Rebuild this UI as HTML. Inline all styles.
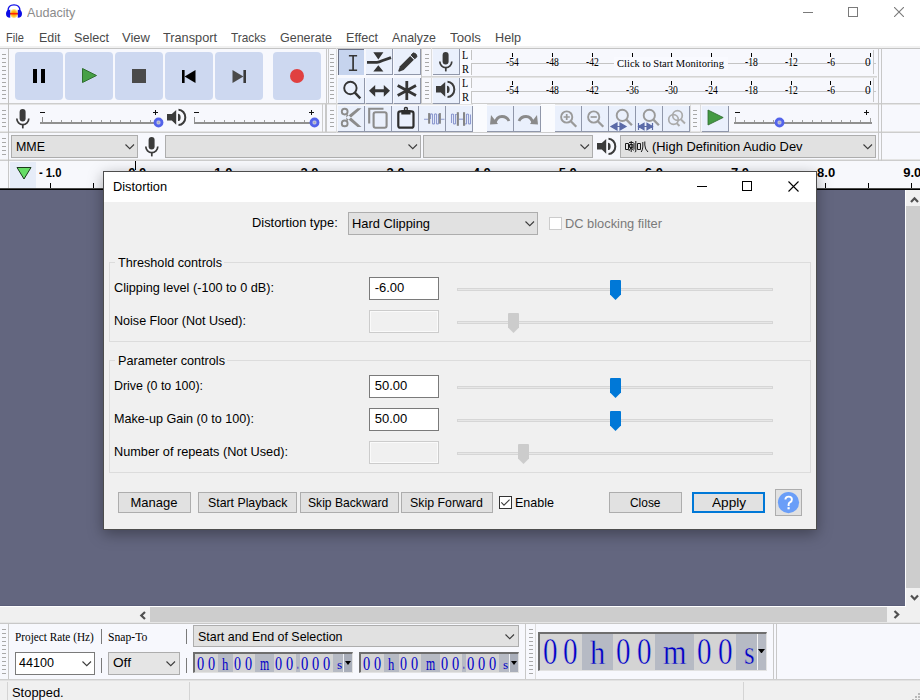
<!DOCTYPE html><html><head><meta charset="utf-8"><style>
html,body{margin:0;padding:0;width:920px;height:700px;overflow:hidden;background:#fff;position:relative}
.t{position:absolute;white-space:nowrap;transform-origin:0 0}
</style></head><body>
<div style="position:absolute;left:0px;top:0px;width:920px;height:47px;background:#fff"></div>
<div style="position:absolute;left:0px;top:46px;width:920px;height:2px;background:#f1f1f1"></div>
<div style="position:absolute;left:0px;top:48px;width:920px;height:1px;background:#c4c4c4"></div>
<div style="position:absolute;left:0px;top:49px;width:920px;height:112px;background:#f7f8fd"></div>
<svg style="position:absolute;left:0px;top:0px;" width="26" height="22" viewBox="0 0 26 22"><defs><radialGradient id="wg" cx="0.5" cy="0.5" r="0.5"><stop offset="0" stop-color="#ff8c00"/><stop offset="0.6" stop-color="#ffc020"/><stop offset="1" stop-color="#fff0b0"/></radialGradient></defs>
<path d="M8 11 C8 6.3 10.5 4.9 14 4.9 C17.5 4.9 20 6.3 20 11" fill="none" stroke="#1010e8" stroke-width="1.4"/>
<ellipse cx="14" cy="13.6" rx="4.2" ry="4.6" fill="url(#wg)"/>
<rect x="10" y="12.9" width="8" height="1.6" fill="#ff2400"/>
<path d="M10.2 9.8 V17.8 Q6 17.6 6 13.8 Q6 10 10.2 9.8 Z M17.8 9.8 V17.8 Q22 17.6 22 13.8 Q22 10 17.8 9.8 Z" fill="#0c0ce6"/></svg>
<div class="t" style="left:27.40px;top:6.00px;font-size:13px;line-height:13px;font-family:'Liberation Sans',sans-serif;color:#8b8b8b;transform:scaleX(0.9708);">Audacity</div>
<div style="position:absolute;left:803px;top:12px;width:10px;height:1px;background:#7a7a7a"></div>
<div style="position:absolute;left:848px;top:7px;width:10px;height:10px;border:1px solid #7a7a7a;box-sizing:border-box"></div>
<svg style="position:absolute;left:894px;top:7px;" width="10" height="10" viewBox="0 0 10 10"><path d="M0 0 L10 10 M10 0 L0 10" stroke="#7a7a7a" stroke-width="1.1"/></svg>
<div class="t" style="left:5.80px;top:31.30px;font-size:13px;line-height:13px;font-family:'Liberation Sans',sans-serif;color:#4a4a4a;transform:scaleX(0.8499);">File</div>
<div class="t" style="left:38.60px;top:31.30px;font-size:13px;line-height:13px;font-family:'Liberation Sans',sans-serif;color:#4a4a4a;transform:scaleX(0.9554);">Edit</div>
<div class="t" style="left:74.00px;top:31.30px;font-size:13px;line-height:13px;font-family:'Liberation Sans',sans-serif;color:#4a4a4a;transform:scaleX(0.9688);">Select</div>
<div class="t" style="left:122.00px;top:31.30px;font-size:13px;line-height:13px;font-family:'Liberation Sans',sans-serif;color:#4a4a4a;">View</div>
<div class="t" style="left:163.00px;top:31.30px;font-size:13px;line-height:13px;font-family:'Liberation Sans',sans-serif;color:#4a4a4a;transform:scaleX(0.9792);">Transport</div>
<div class="t" style="left:231.00px;top:31.30px;font-size:13px;line-height:13px;font-family:'Liberation Sans',sans-serif;color:#4a4a4a;transform:scaleX(0.9086);">Tracks</div>
<div class="t" style="left:280.00px;top:31.30px;font-size:13px;line-height:13px;font-family:'Liberation Sans',sans-serif;color:#4a4a4a;transform:scaleX(0.9595);">Generate</div>
<div class="t" style="left:346.00px;top:31.30px;font-size:13px;line-height:13px;font-family:'Liberation Sans',sans-serif;color:#4a4a4a;transform:scaleX(0.9695);">Effect</div>
<div class="t" style="left:392.00px;top:31.30px;font-size:13px;line-height:13px;font-family:'Liberation Sans',sans-serif;color:#4a4a4a;transform:scaleX(0.9513);">Analyze</div>
<div class="t" style="left:450.00px;top:31.30px;font-size:13px;line-height:13px;font-family:'Liberation Sans',sans-serif;color:#4a4a4a;transform:scaleX(1.0217);">Tools</div>
<div class="t" style="left:495.00px;top:31.30px;font-size:13px;line-height:13px;font-family:'Liberation Sans',sans-serif;color:#4a4a4a;transform:scaleX(0.9723);">Help</div>
<div style="position:absolute;left:0px;top:103px;width:920px;height:1px;background:#cdcdcd"></div>
<div style="position:absolute;left:0px;top:104px;width:920px;height:1px;background:#e4e4e4"></div>
<div style="position:absolute;left:0px;top:131px;width:920px;height:1px;background:#e4e4e4"></div>
<div style="position:absolute;left:0px;top:132px;width:920px;height:1px;background:#cdcdcd"></div>
<div style="position:absolute;left:0px;top:159px;width:920px;height:1px;background:#e4e4e4"></div>
<div style="position:absolute;left:0px;top:160px;width:920px;height:1px;background:#cdcdcd"></div>
<div style="position:absolute;left:2px;top:54px;width:4px;height:1px;background:#a8a8a8"></div>
<div style="position:absolute;left:2px;top:58px;width:4px;height:1px;background:#a8a8a8"></div>
<div style="position:absolute;left:2px;top:62px;width:4px;height:1px;background:#a8a8a8"></div>
<div style="position:absolute;left:2px;top:66px;width:4px;height:1px;background:#a8a8a8"></div>
<div style="position:absolute;left:2px;top:70px;width:4px;height:1px;background:#a8a8a8"></div>
<div style="position:absolute;left:2px;top:74px;width:4px;height:1px;background:#a8a8a8"></div>
<div style="position:absolute;left:2px;top:78px;width:4px;height:1px;background:#a8a8a8"></div>
<div style="position:absolute;left:2px;top:82px;width:4px;height:1px;background:#a8a8a8"></div>
<div style="position:absolute;left:2px;top:86px;width:4px;height:1px;background:#a8a8a8"></div>
<div style="position:absolute;left:2px;top:90px;width:4px;height:1px;background:#a8a8a8"></div>
<div style="position:absolute;left:2px;top:94px;width:4px;height:1px;background:#a8a8a8"></div>
<div style="position:absolute;left:2px;top:98px;width:4px;height:1px;background:#a8a8a8"></div>
<div style="position:absolute;left:8px;top:48px;width:1px;height:56px;background:#c0c0c0"></div>
<div style="position:absolute;left:15px;top:52px;width:48px;height:48px;background:#cdd8f0;border-radius:4px"></div>
<div style="position:absolute;left:65px;top:52px;width:48px;height:48px;background:#cdd8f0;border-radius:4px"></div>
<div style="position:absolute;left:115px;top:52px;width:48px;height:48px;background:#cdd8f0;border-radius:4px"></div>
<div style="position:absolute;left:165px;top:52px;width:48px;height:48px;background:#cdd8f0;border-radius:4px"></div>
<div style="position:absolute;left:215px;top:52px;width:48px;height:48px;background:#cdd8f0;border-radius:4px"></div>
<div style="position:absolute;left:273px;top:52px;width:48px;height:48px;background:#cdd8f0;border-radius:4px"></div>
<div style="position:absolute;left:32.5px;top:69px;width:4.5px;height:14px;background:#000"></div>
<div style="position:absolute;left:40.5px;top:69px;width:4.5px;height:14px;background:#000"></div>
<svg style="position:absolute;left:81px;top:67px;" width="17" height="17" viewBox="0 0 17 17"><path d="M1.5 1.5 L15.5 8.5 L1.5 15.5 Z" fill="#46a046" stroke="#2f6f2f" stroke-width="1"/></svg>
<div style="position:absolute;left:132px;top:69px;width:14px;height:14px;background:#4a4a4a"></div>
<svg style="position:absolute;left:181px;top:69px;" width="16" height="15" viewBox="0 0 16 15"><rect x="1" y="1" width="2.6" height="13" fill="#000"/><path d="M3.6 7.5 L14.5 1 L14.5 14 Z" fill="#000"/></svg>
<svg style="position:absolute;left:231px;top:69px;" width="16" height="15" viewBox="0 0 16 15"><rect x="12.4" y="1" width="2.6" height="13" fill="#3a3a3a"/><path d="M12.4 7.5 L1.5 1 L1.5 14 Z" fill="#4a4a4a"/></svg>
<svg style="position:absolute;left:289px;top:68px;" width="16" height="16" viewBox="0 0 16 16"><circle cx="8" cy="8" r="7" fill="#e04040"/></svg>
<div style="position:absolute;left:326px;top:48px;width:1px;height:56px;background:#c8c8c8"></div>
<div style="position:absolute;left:328px;top:48px;width:1px;height:56px;background:#c8c8c8"></div>
<div style="position:absolute;left:330px;top:54px;width:4px;height:1px;background:#a8a8a8"></div>
<div style="position:absolute;left:330px;top:58px;width:4px;height:1px;background:#a8a8a8"></div>
<div style="position:absolute;left:330px;top:62px;width:4px;height:1px;background:#a8a8a8"></div>
<div style="position:absolute;left:330px;top:66px;width:4px;height:1px;background:#a8a8a8"></div>
<div style="position:absolute;left:330px;top:70px;width:4px;height:1px;background:#a8a8a8"></div>
<div style="position:absolute;left:330px;top:74px;width:4px;height:1px;background:#a8a8a8"></div>
<div style="position:absolute;left:330px;top:78px;width:4px;height:1px;background:#a8a8a8"></div>
<div style="position:absolute;left:330px;top:82px;width:4px;height:1px;background:#a8a8a8"></div>
<div style="position:absolute;left:330px;top:86px;width:4px;height:1px;background:#a8a8a8"></div>
<div style="position:absolute;left:330px;top:90px;width:4px;height:1px;background:#a8a8a8"></div>
<div style="position:absolute;left:330px;top:94px;width:4px;height:1px;background:#a8a8a8"></div>
<div style="position:absolute;left:330px;top:98px;width:4px;height:1px;background:#a8a8a8"></div>
<div style="position:absolute;left:336px;top:48px;width:1px;height:56px;background:#dcdcdc"></div>
<div style="position:absolute;left:338px;top:49px;width:26px;height:26px;background:#c6d4ee;border-top:1px solid #6b7186;border-left:1px solid #6b7186;box-sizing:border-box"></div>
<div style="position:absolute;left:366px;top:49px;width:27px;height:26px;background:#eaf0fc;border-right:1px solid #9097aa;border-bottom:1px solid #9097aa;box-sizing:border-box"></div>
<div style="position:absolute;left:394px;top:49px;width:27px;height:26px;background:#eaf0fc;border-right:1px solid #9097aa;border-bottom:1px solid #9097aa;box-sizing:border-box"></div>
<div style="position:absolute;left:338px;top:78px;width:27px;height:26px;background:#eaf0fc;border-right:1px solid #9097aa;border-bottom:1px solid #9097aa;box-sizing:border-box"></div>
<div style="position:absolute;left:366px;top:78px;width:27px;height:26px;background:#eaf0fc;border-right:1px solid #9097aa;border-bottom:1px solid #9097aa;box-sizing:border-box"></div>
<div style="position:absolute;left:394px;top:78px;width:27px;height:26px;background:#eaf0fc;border-right:1px solid #9097aa;border-bottom:1px solid #9097aa;box-sizing:border-box"></div>
<svg style="position:absolute;left:0px;top:0px;" width="920" height="110" viewBox="0 0 920 110"><path d="M348.9 55.8 H357.1 M348.9 70.2 H357.1" stroke="#353535" stroke-width="1.5"/><path d="M353.1 56 V70" stroke="#353535" stroke-width="1.7"/>
<path d="M373.3 52.3 H383.4 L378.35 59.5 Z M373.3 71.4 H383.4 L378.35 65.2 Z" fill="#353535"/>
<path d="M367 62.3 H377 Q379 62.3 382 60.8 L391 57.6" stroke="#353535" stroke-width="2.8" fill="none"/>
<path d="M398.18 70.88 L399.02 71.72 L403.62 69.96 L413.87 59.70 L410.20 56.03 L399.94 66.28 Z" fill="#383838"/><path d="M414.79 58.78 L417.06 56.52 L415.92 53.98 L413.38 52.84 L411.12 55.11 Z" fill="#383838" stroke="#383838" stroke-width="1" stroke-linejoin="round"/>
<circle cx="350.4" cy="88" r="6.2" fill="none" stroke="#353535" stroke-width="1.9"/><path d="M354.6 92.3 L360.3 98.3" stroke="#353535" stroke-width="2.5"/>
<path d="M369 90.8 L375.2 84.9 V89.3 H383.8 V84.9 L390 90.8 L383.8 96.7 V92.3 H375.2 V96.7 Z" fill="#353535"/>
<path d="M406.8 80.9 V99.9 M397.7 85.5 L416 95.6 M416 85.5 L397.7 95.6" stroke="#353535" stroke-width="2.8"/>
</svg>
<div style="position:absolute;left:421px;top:48px;width:1px;height:56px;background:#c8c8c8"></div>
<div style="position:absolute;left:425px;top:54px;width:4px;height:1px;background:#a8a8a8"></div>
<div style="position:absolute;left:425px;top:58px;width:4px;height:1px;background:#a8a8a8"></div>
<div style="position:absolute;left:425px;top:62px;width:4px;height:1px;background:#a8a8a8"></div>
<div style="position:absolute;left:425px;top:66px;width:4px;height:1px;background:#a8a8a8"></div>
<div style="position:absolute;left:425px;top:70px;width:4px;height:1px;background:#a8a8a8"></div>
<div style="position:absolute;left:425px;top:82px;width:4px;height:1px;background:#a8a8a8"></div>
<div style="position:absolute;left:425px;top:86px;width:4px;height:1px;background:#a8a8a8"></div>
<div style="position:absolute;left:425px;top:90px;width:4px;height:1px;background:#a8a8a8"></div>
<div style="position:absolute;left:425px;top:94px;width:4px;height:1px;background:#a8a8a8"></div>
<div style="position:absolute;left:425px;top:98px;width:4px;height:1px;background:#a8a8a8"></div>
<div style="position:absolute;left:431px;top:48px;width:1px;height:56px;background:#dcdcdc"></div>
<div style="position:absolute;left:433px;top:49px;width:27px;height:26px;background:#eaf0fc;border-right:1px solid #9097aa;border-bottom:1px solid #9097aa;box-sizing:border-box"></div>
<div style="position:absolute;left:433px;top:78px;width:27px;height:26px;background:#eaf0fc;border-right:1px solid #9097aa;border-bottom:1px solid #9097aa;box-sizing:border-box"></div>
<svg style="position:absolute;left:438px;top:51.2px;" width="16" height="22" viewBox="0 0 16 22"><g transform="translate(1 1)"><rect x="3.6" y="0" width="6" height="12.6" rx="3" fill="#3b3b3b"/><path d="M0.8 9.6 A6 6 0 0 0 12.8 9.6" fill="none" stroke="#3b3b3b" stroke-width="1.7"/><path d="M6.8 15.4 V19.4" stroke="#3b3b3b" stroke-width="1.7"/></g></svg>
<svg style="position:absolute;left:435px;top:80.3px;" width="21" height="19" viewBox="0 0 21 19"><g transform="translate(1 1)"><path d="M0 5 H4.8 L9.2 1 V15.8 L4.8 11.6 H0 Z" fill="#3b3b3b"/><path d="M11 4.8 A2.6 3.6 0 0 1 11 12 Z" fill="#3b3b3b"/><path d="M11.5 0.8 A6.8 7.6 0 0 1 11.5 16" fill="none" stroke="#3b3b3b" stroke-width="2"/></g></svg>
<div style="position:absolute;left:878px;top:48px;width:1px;height:113px;background:#c8c8c8"></div>
<div style="position:absolute;left:881px;top:48px;width:1px;height:113px;background:#c8c8c8"></div>
<div style="position:absolute;left:460px;top:49px;width:11px;height:27px;background:#fafbff"></div>
<div style="position:absolute;left:471px;top:50px;width:1px;height:10px;background:#c4c4c4"></div>
<div style="position:absolute;left:471px;top:63px;width:1px;height:12px;background:#c4c4c4"></div>
<div style="position:absolute;left:471px;top:63px;width:400px;height:1px;background:#c4c4c4"></div>
<div style="position:absolute;left:873px;top:50px;width:1px;height:24px;background:#c8c8c8"></div>
<div style="position:absolute;left:873px;top:63px;width:3px;height:1px;background:#c8c8c8"></div>
<div class="t" style="left:461.80px;top:49.00px;font-size:12px;line-height:12px;font-family:'Liberation Serif',serif;color:#000;transform:scaleX(0.8456);">L</div>
<div class="t" style="left:462.00px;top:62.80px;font-size:12px;line-height:12px;font-family:'Liberation Serif',serif;color:#000;transform:scaleX(0.8746);">R</div>
<div style="position:absolute;left:460px;top:77px;width:11px;height:27px;background:#fafbff"></div>
<div style="position:absolute;left:471px;top:78px;width:1px;height:10px;background:#c4c4c4"></div>
<div style="position:absolute;left:471px;top:91px;width:1px;height:12px;background:#c4c4c4"></div>
<div style="position:absolute;left:471px;top:91px;width:400px;height:1px;background:#c4c4c4"></div>
<div style="position:absolute;left:873px;top:78px;width:1px;height:24px;background:#c8c8c8"></div>
<div style="position:absolute;left:873px;top:91px;width:3px;height:1px;background:#c8c8c8"></div>
<div class="t" style="left:461.80px;top:77.00px;font-size:12px;line-height:12px;font-family:'Liberation Serif',serif;color:#000;transform:scaleX(0.8456);">L</div>
<div class="t" style="left:462.00px;top:90.80px;font-size:12px;line-height:12px;font-family:'Liberation Serif',serif;color:#000;transform:scaleX(0.8746);">R</div>
<div style="position:absolute;left:422px;top:76px;width:455px;height:1px;background:#d4d4d4"></div>
<div style="position:absolute;left:422px;top:77px;width:455px;height:1px;background:#e4e4e4"></div>
<div style="position:absolute;left:2px;top:110px;width:4px;height:1px;background:#a8a8a8"></div>
<div style="position:absolute;left:2px;top:114px;width:4px;height:1px;background:#a8a8a8"></div>
<div style="position:absolute;left:2px;top:118px;width:4px;height:1px;background:#a8a8a8"></div>
<div style="position:absolute;left:2px;top:122px;width:4px;height:1px;background:#a8a8a8"></div>
<div style="position:absolute;left:2px;top:126px;width:4px;height:1px;background:#a8a8a8"></div>
<div style="position:absolute;left:8px;top:104px;width:1px;height:29px;background:#c0c0c0"></div>
<svg style="position:absolute;left:15px;top:108px;" width="16" height="22" viewBox="0 0 16 22"><g transform="translate(1 1)"><rect x="3.6" y="0" width="6" height="12.6" rx="3" fill="#3b3b3b"/><path d="M0.8 9.6 A6 6 0 0 0 12.8 9.6" fill="none" stroke="#3b3b3b" stroke-width="1.7"/><path d="M6.8 15.4 V19.4" stroke="#3b3b3b" stroke-width="1.7"/></g></svg>
<div style="position:absolute;left:40px;top:122px;width:118.5px;height:2px;background:#909090"></div>
<div style="position:absolute;left:41.5px;top:117px;width:1px;height:5px;background:#909090"></div>
<div style="position:absolute;left:51.35px;top:120px;width:1px;height:2px;background:#a0a0a0"></div>
<div style="position:absolute;left:61.2px;top:120px;width:1px;height:2px;background:#a0a0a0"></div>
<div style="position:absolute;left:71.05px;top:120px;width:1px;height:2px;background:#a0a0a0"></div>
<div style="position:absolute;left:80.9px;top:120px;width:1px;height:2px;background:#a0a0a0"></div>
<div style="position:absolute;left:90.75px;top:120px;width:1px;height:2px;background:#a0a0a0"></div>
<div style="position:absolute;left:100.6px;top:120px;width:1px;height:2px;background:#a0a0a0"></div>
<div style="position:absolute;left:110.45px;top:120px;width:1px;height:2px;background:#a0a0a0"></div>
<div style="position:absolute;left:120.3px;top:120px;width:1px;height:2px;background:#a0a0a0"></div>
<div style="position:absolute;left:130.14999999999998px;top:120px;width:1px;height:2px;background:#a0a0a0"></div>
<div style="position:absolute;left:140.0px;top:120px;width:1px;height:2px;background:#a0a0a0"></div>
<div style="position:absolute;left:149.85px;top:120px;width:1px;height:2px;background:#a0a0a0"></div>
<div style="position:absolute;left:40px;top:112px;width:5px;height:1.2px;background:#111"></div>
<div style="position:absolute;left:152.7px;top:112px;width:5px;height:1.2px;background:#111"></div>
<div style="position:absolute;left:154.6px;top:110px;width:1.2px;height:5px;background:#111"></div>
<svg style="position:absolute;left:153.0px;top:117px;" width="11" height="11" viewBox="0 0 11 11"><circle cx="5.5" cy="5.5" r="4.9" fill="#5363ea"/><rect x="4" y="4" width="3" height="3" rx="0.8" fill="#a8aab8" stroke="#dfe2f2" stroke-width="0.7"/></svg>
<svg style="position:absolute;left:165.5px;top:108.3px;" width="21" height="19" viewBox="0 0 21 19"><g transform="translate(1 1)"><path d="M0 5 H4.8 L9.2 1 V15.8 L4.8 11.6 H0 Z" fill="#3b3b3b"/><path d="M11 4.8 A2.6 3.6 0 0 1 11 12 Z" fill="#3b3b3b"/><path d="M11.5 0.8 A6.8 7.6 0 0 1 11.5 16" fill="none" stroke="#3b3b3b" stroke-width="2"/></g></svg>
<div style="position:absolute;left:194px;top:122px;width:120.5px;height:2px;background:#909090"></div>
<div style="position:absolute;left:194.4px;top:117px;width:1px;height:5px;background:#909090"></div>
<div style="position:absolute;left:204.4px;top:120px;width:1px;height:2px;background:#a0a0a0"></div>
<div style="position:absolute;left:214.4px;top:120px;width:1px;height:2px;background:#a0a0a0"></div>
<div style="position:absolute;left:224.4px;top:120px;width:1px;height:2px;background:#a0a0a0"></div>
<div style="position:absolute;left:234.4px;top:120px;width:1px;height:2px;background:#a0a0a0"></div>
<div style="position:absolute;left:244.4px;top:120px;width:1px;height:2px;background:#a0a0a0"></div>
<div style="position:absolute;left:254.4px;top:120px;width:1px;height:2px;background:#a0a0a0"></div>
<div style="position:absolute;left:264.4px;top:120px;width:1px;height:2px;background:#a0a0a0"></div>
<div style="position:absolute;left:274.4px;top:120px;width:1px;height:2px;background:#a0a0a0"></div>
<div style="position:absolute;left:284.4px;top:120px;width:1px;height:2px;background:#a0a0a0"></div>
<div style="position:absolute;left:294.4px;top:120px;width:1px;height:2px;background:#a0a0a0"></div>
<div style="position:absolute;left:304.4px;top:120px;width:1px;height:2px;background:#a0a0a0"></div>
<div style="position:absolute;left:194px;top:112px;width:5px;height:1.2px;background:#111"></div>
<div style="position:absolute;left:308.7px;top:112px;width:5px;height:1.2px;background:#111"></div>
<div style="position:absolute;left:310.6px;top:110px;width:1.2px;height:5px;background:#111"></div>
<svg style="position:absolute;left:308.5px;top:117px;" width="11" height="11" viewBox="0 0 11 11"><circle cx="5.5" cy="5.5" r="4.9" fill="#5363ea"/><rect x="4" y="4" width="3" height="3" rx="0.8" fill="#a8aab8" stroke="#dfe2f2" stroke-width="0.7"/></svg>
<div style="position:absolute;left:322px;top:104px;width:1px;height:28px;background:#cccccc"></div>
<div style="position:absolute;left:325px;top:104px;width:2px;height:28px;background:#c8c8c8"></div>
<div style="position:absolute;left:330px;top:110px;width:4px;height:1px;background:#a8a8a8"></div>
<div style="position:absolute;left:330px;top:114px;width:4px;height:1px;background:#a8a8a8"></div>
<div style="position:absolute;left:330px;top:118px;width:4px;height:1px;background:#a8a8a8"></div>
<div style="position:absolute;left:330px;top:122px;width:4px;height:1px;background:#a8a8a8"></div>
<div style="position:absolute;left:330px;top:126px;width:4px;height:1px;background:#a8a8a8"></div>
<div style="position:absolute;left:336px;top:104px;width:1px;height:29px;background:#dcdcdc"></div>
<div style="position:absolute;left:338px;top:106px;width:27px;height:26px;background:#eaf0fc;border-right:1px solid #9097aa;border-bottom:1px solid #9097aa;box-sizing:border-box"></div>
<div style="position:absolute;left:365px;top:106px;width:27px;height:26px;background:#eaf0fc;border-right:1px solid #9097aa;border-bottom:1px solid #9097aa;box-sizing:border-box"></div>
<div style="position:absolute;left:392px;top:106px;width:27px;height:26px;background:#eaf0fc;border-right:1px solid #9097aa;border-bottom:1px solid #9097aa;box-sizing:border-box"></div>
<div style="position:absolute;left:419px;top:106px;width:27px;height:26px;background:#eaf0fc;border-right:1px solid #9097aa;border-bottom:1px solid #9097aa;box-sizing:border-box"></div>
<div style="position:absolute;left:446px;top:106px;width:27px;height:26px;background:#eaf0fc;border-right:1px solid #9097aa;border-bottom:1px solid #9097aa;box-sizing:border-box"></div>
<svg style="position:absolute;left:0px;top:100px;" width="440" height="40" viewBox="0 0 440 40"><g transform="translate(0 -100)"><circle cx="344.7" cy="111.6" r="2.9" fill="none" stroke="#8c8c8c" stroke-width="1.9"/><circle cx="344.7" cy="123.4" r="2.9" fill="none" stroke="#8c8c8c" stroke-width="1.9"/><path d="M346.8 113.8 L361.5 127 L357.5 127 L346 117.5 Z M346.8 121.2 L361.5 108.2 L357.5 108.2 L346 117.5 Z" fill="#8c8c8c"/></g></svg>
<svg style="position:absolute;left:0px;top:100px;" width="440" height="40" viewBox="0 0 440 40"><g transform="translate(0 -100)"><path d="M369.2 123.5 V108.8 H383.5" fill="none" stroke="#8c8c8c" stroke-width="2.1"/><rect x="373.6" y="112.3" width="13" height="15.4" rx="2" fill="none" stroke="#8c8c8c" stroke-width="2.1"/></g></svg>
<svg style="position:absolute;left:0px;top:100px;" width="440" height="40" viewBox="0 0 440 40"><g transform="translate(0 -100)"><rect x="398.3" y="111.4" width="15.2" height="16.3" rx="2" fill="none" stroke="#2e2e2e" stroke-width="2.2"/><rect x="401.3" y="110" width="9.2" height="4.5" fill="#2e2e2e"/><circle cx="405.9" cy="108.9" r="2.2" fill="#2e2e2e"/><circle cx="405.9" cy="109" r="0.85" fill="#eaf0fc"/></g></svg>
<svg style="position:absolute;left:0px;top:100px;" width="480" height="40" viewBox="0 0 480 40"><g transform="translate(0 -100)"><path d="M424 119.2 H428.5 M440.5 119.2 H444.5" stroke="#8e9ad0" stroke-width="1.1"/><path d="M430.5 119 V114.3 Q431.5 113.3 432.5 114.3 V123.5 Q433.5 124.5 434.5 123.5 V114.3 Q435.5 113.3 436.5 114.3 V123.5 Q437.5 124.5 438.5 123.5 V114" fill="none" stroke="#8e9ad0" stroke-width="1.1"/><rect x="428.1" y="113.1" width="2.1" height="10.6" fill="#858585"/><rect x="438.8" y="113.1" width="2.1" height="10.6" fill="#858585"/></g></svg>
<svg style="position:absolute;left:0px;top:100px;" width="480" height="40" viewBox="0 0 480 40"><g transform="translate(0 -100)"><path d="M451.5 123 V114.5 Q452.5 113.5 453.5 114.5 V123.5 Q454.5 124.5 455.5 123.5 V114.5 H456.8 M465 123.5 Q465.5 124.5 466.5 123.5 V114.5 Q467.5 113.5 468.5 114.5 V123.5 Q469.5 124.5 470.5 123.5 V114.5" fill="none" stroke="#8e9ad0" stroke-width="1.1"/><path d="M458.8 119.2 H463" stroke="#8e9ad0" stroke-width="1.1"/><rect x="456.8" y="112.2" width="2.1" height="13.6" fill="#858585"/><rect x="463" y="112.2" width="2.1" height="13.6" fill="#858585"/></g></svg>
<div style="position:absolute;left:473px;top:104px;width:14px;height:28px;background:#fafbfe"></div>
<div style="position:absolute;left:487px;top:106px;width:27px;height:26px;background:#eaf0fc;border-right:1px solid #9097aa;border-bottom:1px solid #9097aa;box-sizing:border-box"></div>
<div style="position:absolute;left:514px;top:106px;width:27px;height:26px;background:#eaf0fc;border-right:1px solid #9097aa;border-bottom:1px solid #9097aa;box-sizing:border-box"></div>
<svg style="position:absolute;left:487px;top:106px;" width="27" height="26" viewBox="0 0 27 26"><path d="M8 17.5 Q9.5 10.5 15 10.5 Q20 10.5 22 15" fill="none" stroke="#8a8a8a" stroke-width="2.8"/><path d="M4 9 L11 18 L3 18.5 Z" fill="#8a8a8a"/></svg>
<svg style="position:absolute;left:514px;top:106px;" width="27" height="26" viewBox="0 0 27 26"><path d="M19 17.5 Q17.5 10.5 12 10.5 Q7 10.5 5 15" fill="none" stroke="#8a8a8a" stroke-width="2.8"/><path d="M23 9 L16 18 L24 18.5 Z" fill="#8a8a8a"/></svg>
<div style="position:absolute;left:541px;top:104px;width:14px;height:28px;background:#fafbfe"></div>
<div style="position:absolute;left:555px;top:106px;width:27px;height:26px;background:#eaf0fc;border-right:1px solid #9097aa;border-bottom:1px solid #9097aa;box-sizing:border-box"></div>
<div style="position:absolute;left:582px;top:106px;width:27px;height:26px;background:#eaf0fc;border-right:1px solid #9097aa;border-bottom:1px solid #9097aa;box-sizing:border-box"></div>
<div style="position:absolute;left:609px;top:106px;width:27px;height:26px;background:#eaf0fc;border-right:1px solid #9097aa;border-bottom:1px solid #9097aa;box-sizing:border-box"></div>
<div style="position:absolute;left:636px;top:106px;width:27px;height:26px;background:#eaf0fc;border-right:1px solid #9097aa;border-bottom:1px solid #9097aa;box-sizing:border-box"></div>
<div style="position:absolute;left:663px;top:106px;width:27px;height:26px;background:#eaf0fc;border-right:1px solid #9097aa;border-bottom:1px solid #9097aa;box-sizing:border-box"></div>
<svg style="position:absolute;left:555px;top:106px;" width="27" height="26" viewBox="0 0 27 26"><circle cx="11.7" cy="11" r="5.6" fill="none" stroke="#9a9a9a" stroke-width="1.9"/><path d="M15.799999999999999 15.2 L21.299999999999997 20.8" stroke="#9a9a9a" stroke-width="2.3"/><path d="M8.6 11 H14.8 M11.7 7.9 V14.1" stroke="#9a9a9a" stroke-width="1.7"/></svg>
<svg style="position:absolute;left:582px;top:106px;" width="27" height="26" viewBox="0 0 27 26"><circle cx="11.7" cy="11" r="5.6" fill="none" stroke="#9a9a9a" stroke-width="1.9"/><path d="M15.799999999999999 15.2 L21.299999999999997 20.8" stroke="#9a9a9a" stroke-width="2.3"/><path d="M8.6 11 H14.8" stroke="#9a9a9a" stroke-width="1.7"/></svg>
<svg style="position:absolute;left:609px;top:106px;" width="27" height="26" viewBox="0 0 27 26"><circle cx="13.3" cy="9.4" r="5.6" fill="none" stroke="#9a9a9a" stroke-width="1.9"/><path d="M17.4 13.600000000000001 L22.9 19.200000000000003" stroke="#9a9a9a" stroke-width="2.3"/><path d="M2 20.5 L8 17 V24 Z M17 20.5 L11 17 V24 Z M5 20.5 H14" fill="#5a6aa8" stroke="#5a6aa8" stroke-width="1.2"/></svg>
<svg style="position:absolute;left:636px;top:106px;" width="27" height="26" viewBox="0 0 27 26"><circle cx="13.3" cy="9.4" r="5.6" fill="none" stroke="#9a9a9a" stroke-width="1.9"/><path d="M17.4 13.600000000000001 L22.9 19.200000000000003" stroke="#9a9a9a" stroke-width="2.3"/><path d="M2.5 17 V24 M16.5 17 V24 M2.5 20.5 L8 17.3 V23.7 Z M16.5 20.5 L11 17.3 V23.7 Z M5 20.5 H14" fill="#5a6aa8" stroke="#5a6aa8" stroke-width="1.2"/></svg>
<svg style="position:absolute;left:663px;top:106px;" width="27" height="26" viewBox="0 0 27 26"><circle cx="10.5" cy="13.5" r="4.8" fill="none" stroke="#ababab" stroke-width="1.7"/><circle cx="14.5" cy="9.5" r="4.8" fill="none" stroke="#ababab" stroke-width="1.7"/><path d="M18 13.5 L22 17.5 M13.5 17 L16.5 20" stroke="#ababab" stroke-width="1.9"/></svg>
<div style="position:absolute;left:690px;top:104px;width:1px;height:28px;background:#dcdcdc"></div>
<div style="position:absolute;left:693px;top:110px;width:4px;height:1px;background:#a8a8a8"></div>
<div style="position:absolute;left:693px;top:114px;width:4px;height:1px;background:#a8a8a8"></div>
<div style="position:absolute;left:693px;top:118px;width:4px;height:1px;background:#a8a8a8"></div>
<div style="position:absolute;left:693px;top:122px;width:4px;height:1px;background:#a8a8a8"></div>
<div style="position:absolute;left:693px;top:126px;width:4px;height:1px;background:#a8a8a8"></div>
<div style="position:absolute;left:700px;top:104px;width:1px;height:29px;background:#dcdcdc"></div>
<div style="position:absolute;left:702px;top:106px;width:27px;height:26px;background:#eaf0fc;border-right:1px solid #9097aa;border-bottom:1px solid #9097aa;box-sizing:border-box"></div>
<svg style="position:absolute;left:702px;top:106px;" width="27" height="26" viewBox="0 0 27 26"><path d="M6 4 L21.2 11.5 L6 19 Z" fill="#439a43" stroke="#2f6a2f" stroke-width="0.8" stroke-linejoin="round"/></svg>
<div style="position:absolute;left:735px;top:112px;width:5px;height:1.2px;background:#111"></div>
<div style="position:absolute;left:864px;top:112px;width:5px;height:1.2px;background:#111"></div>
<div style="position:absolute;left:865.9px;top:110px;width:1.2px;height:5px;background:#111"></div>
<div style="position:absolute;left:734px;top:122px;width:137.5px;height:2px;background:#909090"></div>
<div style="position:absolute;left:869.5px;top:118px;width:1px;height:4px;background:#a0a0a0"></div>
<div style="position:absolute;left:734.5px;top:117px;width:1px;height:5px;background:#a0a0a0"></div>
<div style="position:absolute;left:744.14px;top:120px;width:1px;height:2px;background:#a0a0a0"></div>
<div style="position:absolute;left:753.78px;top:120px;width:1px;height:2px;background:#a0a0a0"></div>
<div style="position:absolute;left:763.42px;top:120px;width:1px;height:2px;background:#a0a0a0"></div>
<div style="position:absolute;left:773.06px;top:120px;width:1px;height:2px;background:#a0a0a0"></div>
<div style="position:absolute;left:782.7px;top:120px;width:1px;height:2px;background:#a0a0a0"></div>
<div style="position:absolute;left:792.34px;top:120px;width:1px;height:2px;background:#a0a0a0"></div>
<div style="position:absolute;left:801.98px;top:120px;width:1px;height:2px;background:#a0a0a0"></div>
<div style="position:absolute;left:811.62px;top:120px;width:1px;height:2px;background:#a0a0a0"></div>
<div style="position:absolute;left:821.26px;top:120px;width:1px;height:2px;background:#a0a0a0"></div>
<div style="position:absolute;left:830.9px;top:120px;width:1px;height:2px;background:#a0a0a0"></div>
<div style="position:absolute;left:840.54px;top:120px;width:1px;height:2px;background:#a0a0a0"></div>
<div style="position:absolute;left:850.1800000000001px;top:120px;width:1px;height:2px;background:#a0a0a0"></div>
<div style="position:absolute;left:859.82px;top:120px;width:1px;height:2px;background:#a0a0a0"></div>
<svg style="position:absolute;left:774px;top:117px;" width="11" height="11" viewBox="0 0 11 11"><circle cx="5.5" cy="5.5" r="4.9" fill="#5363ea"/><rect x="4" y="4" width="3" height="3" rx="0.8" fill="#a8aab8" stroke="#dfe2f2" stroke-width="0.7"/></svg>
<div style="position:absolute;left:2px;top:138px;width:4px;height:1px;background:#a8a8a8"></div>
<div style="position:absolute;left:2px;top:142px;width:4px;height:1px;background:#a8a8a8"></div>
<div style="position:absolute;left:2px;top:146px;width:4px;height:1px;background:#a8a8a8"></div>
<div style="position:absolute;left:2px;top:150px;width:4px;height:1px;background:#a8a8a8"></div>
<div style="position:absolute;left:2px;top:154px;width:4px;height:1px;background:#a8a8a8"></div>
<div style="position:absolute;left:8px;top:132px;width:1px;height:29px;background:#c0c0c0"></div>
<div style="position:absolute;left:11px;top:135px;width:127px;height:23px;background:#e1e1e1;border:1px solid #adadad;box-sizing:border-box"></div>
<svg style="position:absolute;left:124.5px;top:143.5px;" width="10" height="6" viewBox="0 0 10 6"><path d="M0.5 0.5 L4.75 4.75 L9 0.5" fill="none" stroke="#3c3c3c" stroke-width="1.1"/></svg>
<div class="t" style="left:16.00px;top:140.00px;font-size:13px;line-height:13px;font-family:'Liberation Sans',sans-serif;color:#000;transform:scaleX(0.9562);">MME</div>
<svg style="position:absolute;left:144.2px;top:136px;" width="16" height="22" viewBox="0 0 16 22"><g transform="translate(1 1)"><rect x="3.6" y="0" width="6" height="12.6" rx="3" fill="#3b3b3b"/><path d="M0.8 9.6 A6 6 0 0 0 12.8 9.6" fill="none" stroke="#3b3b3b" stroke-width="1.7"/><path d="M6.8 15.4 V19.4" stroke="#3b3b3b" stroke-width="1.7"/></g></svg>
<div style="position:absolute;left:165px;top:135px;width:256px;height:23px;background:#e1e1e1;border:1px solid #adadad;box-sizing:border-box"></div>
<svg style="position:absolute;left:407.5px;top:143.5px;" width="10" height="6" viewBox="0 0 10 6"><path d="M0.5 0.5 L4.75 4.75 L9 0.5" fill="none" stroke="#3c3c3c" stroke-width="1.1"/></svg>
<div style="position:absolute;left:423px;top:135px;width:170px;height:23px;background:#e1e1e1;border:1px solid #adadad;box-sizing:border-box"></div>
<svg style="position:absolute;left:579.5px;top:143.5px;" width="10" height="6" viewBox="0 0 10 6"><path d="M0.5 0.5 L4.75 4.75 L9 0.5" fill="none" stroke="#3c3c3c" stroke-width="1.1"/></svg>
<svg style="position:absolute;left:595.8px;top:137px;" width="21" height="19" viewBox="0 0 21 19"><g transform="translate(1 1)"><path d="M0 5 H4.8 L9.2 1 V15.8 L4.8 11.6 H0 Z" fill="#3b3b3b"/><path d="M11 4.8 A2.6 3.6 0 0 1 11 12 Z" fill="#3b3b3b"/><path d="M11.5 0.8 A6.8 7.6 0 0 1 11.5 16" fill="none" stroke="#3b3b3b" stroke-width="2"/></g></svg>
<div style="position:absolute;left:620px;top:135px;width:256px;height:23px;background:#e1e1e1;border:1px solid #adadad;box-sizing:border-box"></div>
<svg style="position:absolute;left:862.5px;top:143.5px;" width="10" height="6" viewBox="0 0 10 6"><path d="M0.5 0.5 L4.75 4.75 L9 0.5" fill="none" stroke="#3c3c3c" stroke-width="1.1"/></svg>
<svg style="position:absolute;left:620px;top:136px;" width="36" height="20" viewBox="0 0 36 20"><g transform="translate(-620 -136)" fill="none" stroke="#1a1a1a" stroke-width="1"><path d="M625.5 143.5 H628.5 V149.5 H625.5 Z"/><path d="M629 142.5 H633.5 M631.2 141 V152 M629.5 144.5 H632.8 V147.5 H629.5 Z M631 147.8 L628.8 151 M631.4 147.8 L633.5 150.5"/><path d="M634 143 V149.5 M635.8 141 V151.5 L634.8 152"/><path d="M637.5 143.5 H640.5 V149.5 H637.5 Z"/><path d="M642.8 142 V147 Q642.6 150 641.2 152"/><path d="M644.8 141.5 V145 Q645 149.5 648 152"/></g></svg>
<div class="t" style="left:651.50px;top:140.00px;font-size:13px;line-height:13px;font-family:'Liberation Sans',sans-serif;color:#000;transform:scaleX(0.9918);">(High Definition Audio Dev</div>
<div style="position:absolute;left:0px;top:161px;width:920px;height:27px;background:#f7f8fc"></div>
<div style="position:absolute;left:8px;top:161px;width:1px;height:27px;background:#c8c8c8"></div>
<div style="position:absolute;left:10px;top:162px;width:26px;height:26px;background:#e6ecf8"></div>
<svg style="position:absolute;left:16px;top:166px;" width="16" height="14" viewBox="0 0 16 14"><path d="M1 1.5 H15 L8 13 Z" fill="#66dd66" stroke="#1a3a1a" stroke-width="1"/></svg>
<div class="t" style="left:38.50px;top:165.70px;font-size:13px;line-height:13px;font-family:'Liberation Sans',sans-serif;color:#000;font-weight:bold;transform:scaleX(0.8650);">- 1.0</div>
<div style="position:absolute;left:50px;top:183px;width:1px;height:5px;background:#000"></div>
<div style="position:absolute;left:93px;top:183px;width:1px;height:5px;background:#000"></div>
<div style="position:absolute;left:136px;top:183px;width:1px;height:5px;background:#000"></div>
<div style="position:absolute;left:180px;top:183px;width:1px;height:5px;background:#000"></div>
<div class="t" style="left:128.27px;top:165.60px;font-size:13px;line-height:13px;font-family:'Liberation Sans',sans-serif;color:#000;font-weight:bold;">0.0</div>
<div style="position:absolute;left:223px;top:183px;width:1px;height:5px;background:#000"></div>
<div style="position:absolute;left:266px;top:183px;width:1px;height:5px;background:#000"></div>
<div class="t" style="left:214.37px;top:165.60px;font-size:13px;line-height:13px;font-family:'Liberation Sans',sans-serif;color:#000;font-weight:bold;">1.0</div>
<div style="position:absolute;left:309px;top:183px;width:1px;height:5px;background:#000"></div>
<div style="position:absolute;left:352px;top:183px;width:1px;height:5px;background:#000"></div>
<div class="t" style="left:300.46px;top:165.60px;font-size:13px;line-height:13px;font-family:'Liberation Sans',sans-serif;color:#000;font-weight:bold;">2.0</div>
<div style="position:absolute;left:395px;top:183px;width:1px;height:5px;background:#000"></div>
<div style="position:absolute;left:438px;top:183px;width:1px;height:5px;background:#000"></div>
<div class="t" style="left:386.56px;top:165.60px;font-size:13px;line-height:13px;font-family:'Liberation Sans',sans-serif;color:#000;font-weight:bold;">3.0</div>
<div style="position:absolute;left:481px;top:183px;width:1px;height:5px;background:#000"></div>
<div style="position:absolute;left:524px;top:183px;width:1px;height:5px;background:#000"></div>
<div class="t" style="left:472.66px;top:165.60px;font-size:13px;line-height:13px;font-family:'Liberation Sans',sans-serif;color:#000;font-weight:bold;">4.0</div>
<div style="position:absolute;left:567px;top:183px;width:1px;height:5px;background:#000"></div>
<div style="position:absolute;left:610px;top:183px;width:1px;height:5px;background:#000"></div>
<div class="t" style="left:558.76px;top:165.60px;font-size:13px;line-height:13px;font-family:'Liberation Sans',sans-serif;color:#000;font-weight:bold;">5.0</div>
<div style="position:absolute;left:653px;top:183px;width:1px;height:5px;background:#000"></div>
<div style="position:absolute;left:696px;top:183px;width:1px;height:5px;background:#000"></div>
<div class="t" style="left:644.86px;top:165.60px;font-size:13px;line-height:13px;font-family:'Liberation Sans',sans-serif;color:#000;font-weight:bold;">6.0</div>
<div style="position:absolute;left:739px;top:183px;width:1px;height:5px;background:#000"></div>
<div style="position:absolute;left:782px;top:183px;width:1px;height:5px;background:#000"></div>
<div class="t" style="left:730.96px;top:165.60px;font-size:13px;line-height:13px;font-family:'Liberation Sans',sans-serif;color:#000;font-weight:bold;">7.0</div>
<div style="position:absolute;left:825px;top:183px;width:1px;height:5px;background:#000"></div>
<div style="position:absolute;left:868px;top:183px;width:1px;height:5px;background:#000"></div>
<div class="t" style="left:817.06px;top:165.60px;font-size:13px;line-height:13px;font-family:'Liberation Sans',sans-serif;color:#000;font-weight:bold;">8.0</div>
<div style="position:absolute;left:911px;top:183px;width:1px;height:5px;background:#000"></div>
<div class="t" style="left:903.16px;top:165.60px;font-size:13px;line-height:13px;font-family:'Liberation Sans',sans-serif;color:#000;font-weight:bold;">9.0</div>
<div style="position:absolute;left:135px;top:161px;width:1px;height:9px;background:#000"></div>
<div style="position:absolute;left:0px;top:188px;width:920px;height:1px;background:#4a4a4a"></div>
<div style="position:absolute;left:0px;top:189px;width:920px;height:1px;background:#000"></div>
<div style="position:absolute;left:0px;top:190px;width:905px;height:416px;background:#63667f"></div>
<div style="position:absolute;left:0px;top:605px;width:905px;height:1px;background:#5b5e79"></div>
<div style="position:absolute;left:905px;top:190px;width:1px;height:417px;background:#fff"></div>
<div style="position:absolute;left:0px;top:606px;width:906px;height:1px;background:#fff"></div>
<div style="position:absolute;left:906px;top:190px;width:14px;height:417px;background:#f0f0f0"></div>
<div style="position:absolute;left:906px;top:206px;width:14px;height:382px;background:#cdcdcd"></div>
<svg style="position:absolute;left:909.5px;top:195.5px;" width="9" height="8" viewBox="0 0 9 8"><path d="M1 6 L4.5 2.3 L8 6" fill="none" stroke="#505050" stroke-width="2.2"/></svg>
<svg style="position:absolute;left:909.5px;top:594px;" width="9" height="8" viewBox="0 0 9 8"><path d="M1 1.5 L4.5 5.2 L8 1.5" fill="none" stroke="#505050" stroke-width="2.2"/></svg>
<div style="position:absolute;left:0px;top:607px;width:920px;height:16px;background:#f0f0f0"></div>
<div style="position:absolute;left:150px;top:607px;width:737px;height:15px;background:#cdcdcd"></div>
<svg style="position:absolute;left:138.5px;top:610.5px;" width="8" height="9" viewBox="0 0 8 9"><path d="M6 1 L2.3 4.5 L6 8" fill="none" stroke="#505050" stroke-width="2.2"/></svg>
<svg style="position:absolute;left:893px;top:610px;" width="8" height="9" viewBox="0 0 8 9"><path d="M1.5 1 L5.2 4.5 L1.5 8" fill="none" stroke="#505050" stroke-width="2.2"/></svg>
<div style="position:absolute;left:0px;top:622px;width:920px;height:1px;background:#e6e6e6"></div>
<div style="position:absolute;left:0px;top:623px;width:920px;height:1px;background:#c8c8c8"></div>
<div style="position:absolute;left:103px;top:171px;width:714px;height:359px;background:#f0f0f0;border:1px solid #4d4d4d;box-sizing:border-box;box-shadow:0 4px 14px rgba(0,0,0,0.35)"></div>
<div style="position:absolute;left:104px;top:172px;width:712px;height:30px;background:#fff"></div>
<div class="t" style="left:112.60px;top:180.00px;font-size:13px;line-height:13px;font-family:'Liberation Sans',sans-serif;color:#000;transform:scaleX(0.9852);">Distortion</div>
<div style="position:absolute;left:697px;top:186px;width:10px;height:1px;background:#000"></div>
<div style="position:absolute;left:742px;top:181px;width:10px;height:10px;border:1px solid #000;box-sizing:border-box"></div>
<svg style="position:absolute;left:788px;top:181px;" width="11" height="11" viewBox="0 0 11 11"><path d="M0.5 0.5 L10.5 10.5 M10.5 0.5 L0.5 10.5" stroke="#000" stroke-width="1.1"/></svg>
<div class="t" style="left:251.80px;top:216.00px;font-size:13px;line-height:13px;font-family:'Liberation Sans',sans-serif;color:#000;transform:scaleX(0.9885);">Distortion type:</div>
<div style="position:absolute;left:348px;top:212px;width:190px;height:23px;background:#e1e1e1;border:1px solid #adadad;box-sizing:border-box"></div>
<div class="t" style="left:352.00px;top:217.00px;font-size:13px;line-height:13px;font-family:'Liberation Sans',sans-serif;color:#000;transform:scaleX(0.9903);">Hard Clipping</div>
<svg style="position:absolute;left:524.5px;top:221px;" width="10" height="6" viewBox="0 0 10 6"><path d="M0.5 0.5 L4.75 4.75 L9 0.5" fill="none" stroke="#3c3c3c" stroke-width="1.1"/></svg>
<div style="position:absolute;left:549px;top:217px;width:13px;height:13px;background:#fff;border:1px solid #cccccc;box-sizing:border-box"></div>
<div class="t" style="left:565.00px;top:217.00px;font-size:13px;line-height:13px;font-family:'Liberation Sans',sans-serif;color:#7a7a7a;transform:scaleX(0.9872);">DC blocking filter</div>
<div style="position:absolute;left:109px;top:262px;width:702px;height:80px;border:1px solid #dcdcdc;box-sizing:border-box"></div>
<div style="position:absolute;left:115px;top:256px;width:109px;height:12px;background:#f0f0f0"></div>
<div class="t" style="left:118.00px;top:256.00px;font-size:13px;line-height:13px;font-family:'Liberation Sans',sans-serif;color:#000;transform:scaleX(0.9725);">Threshold controls</div>
<div style="position:absolute;left:109px;top:360px;width:702px;height:113px;border:1px solid #dcdcdc;box-sizing:border-box"></div>
<div style="position:absolute;left:115px;top:354px;width:112px;height:12px;background:#f0f0f0"></div>
<div class="t" style="left:118.00px;top:354.00px;font-size:13px;line-height:13px;font-family:'Liberation Sans',sans-serif;color:#000;transform:scaleX(0.9743);">Parameter controls</div>
<div class="t" style="left:114.00px;top:281.00px;font-size:13px;line-height:13px;font-family:'Liberation Sans',sans-serif;color:#000;transform:scaleX(0.9754);">Clipping level (-100 to 0 dB):</div>
<div style="position:absolute;left:369px;top:277px;width:70px;height:23px;background:#fff;border:1px solid #7a7a7a;box-sizing:border-box"></div>
<div class="t" style="left:374.70px;top:281.00px;font-size:13px;line-height:13px;font-family:'Liberation Sans',sans-serif;color:#000;">-6.00</div>
<div style="position:absolute;left:457px;top:287.5px;width:316px;height:3px;background:#e7e7e7;border:1px solid #d6d6d6;box-sizing:border-box"></div>
<svg style="position:absolute;left:610px;top:279.5px;" width="11" height="20" viewBox="0 0 11 20"><path d="M0 1 Q0 0 1 0 H10 Q11 0 11 1 V14.5 L5.5 20 L0 14.5 Z" fill="#0078d7"/></svg>
<div class="t" style="left:114.00px;top:314.00px;font-size:13px;line-height:13px;font-family:'Liberation Sans',sans-serif;color:#000;transform:scaleX(0.9668);">Noise Floor (Not Used):</div>
<div style="position:absolute;left:369px;top:310px;width:70px;height:23px;background:#f0f0f0;border:1px solid #cccccc;box-sizing:border-box;box-shadow:inset 0 0 0 1px #fafafa"></div>
<div style="position:absolute;left:457px;top:320.5px;width:316px;height:3px;background:#e7e7e7;border:1px solid #d6d6d6;box-sizing:border-box"></div>
<svg style="position:absolute;left:508px;top:312.5px;" width="11" height="20" viewBox="0 0 11 20"><path d="M0 1 Q0 0 1 0 H10 Q11 0 11 1 V14.5 L5.5 20 L0 14.5 Z" fill="#cccccc"/></svg>
<div class="t" style="left:114.00px;top:379.00px;font-size:13px;line-height:13px;font-family:'Liberation Sans',sans-serif;color:#000;transform:scaleX(0.9550);">Drive (0 to 100):</div>
<div style="position:absolute;left:369px;top:375px;width:70px;height:23px;background:#fff;border:1px solid #7a7a7a;box-sizing:border-box"></div>
<div class="t" style="left:374.70px;top:379.00px;font-size:13px;line-height:13px;font-family:'Liberation Sans',sans-serif;color:#000;">50.00</div>
<div style="position:absolute;left:457px;top:385.5px;width:316px;height:3px;background:#e7e7e7;border:1px solid #d6d6d6;box-sizing:border-box"></div>
<svg style="position:absolute;left:610px;top:377.5px;" width="11" height="20" viewBox="0 0 11 20"><path d="M0 1 Q0 0 1 0 H10 Q11 0 11 1 V14.5 L5.5 20 L0 14.5 Z" fill="#0078d7"/></svg>
<div class="t" style="left:114.00px;top:412.00px;font-size:13px;line-height:13px;font-family:'Liberation Sans',sans-serif;color:#000;transform:scaleX(0.9687);">Make-up Gain (0 to 100):</div>
<div style="position:absolute;left:369px;top:408px;width:70px;height:23px;background:#fff;border:1px solid #7a7a7a;box-sizing:border-box"></div>
<div class="t" style="left:374.70px;top:412.00px;font-size:13px;line-height:13px;font-family:'Liberation Sans',sans-serif;color:#000;">50.00</div>
<div style="position:absolute;left:457px;top:418.5px;width:316px;height:3px;background:#e7e7e7;border:1px solid #d6d6d6;box-sizing:border-box"></div>
<svg style="position:absolute;left:610px;top:410.5px;" width="11" height="20" viewBox="0 0 11 20"><path d="M0 1 Q0 0 1 0 H10 Q11 0 11 1 V14.5 L5.5 20 L0 14.5 Z" fill="#0078d7"/></svg>
<div class="t" style="left:114.00px;top:445.00px;font-size:13px;line-height:13px;font-family:'Liberation Sans',sans-serif;color:#000;transform:scaleX(0.9790);">Number of repeats (Not Used):</div>
<div style="position:absolute;left:369px;top:441px;width:70px;height:23px;background:#f0f0f0;border:1px solid #cccccc;box-sizing:border-box;box-shadow:inset 0 0 0 1px #fafafa"></div>
<div style="position:absolute;left:457px;top:451.5px;width:316px;height:3px;background:#e7e7e7;border:1px solid #d6d6d6;box-sizing:border-box"></div>
<svg style="position:absolute;left:518px;top:443.5px;" width="11" height="20" viewBox="0 0 11 20"><path d="M0 1 Q0 0 1 0 H10 Q11 0 11 1 V14.5 L5.5 20 L0 14.5 Z" fill="#cccccc"/></svg>
<div style="position:absolute;left:118px;top:492px;width:73px;height:21px;background:#e1e1e1;border:1px solid #adadad;box-sizing:border-box"></div>
<div class="t" style="left:130.50px;top:496.00px;font-size:13px;line-height:13px;font-family:'Liberation Sans',sans-serif;color:#000;">Manage</div>
<div style="position:absolute;left:198px;top:492px;width:99px;height:21px;background:#e1e1e1;border:1px solid #adadad;box-sizing:border-box"></div>
<div class="t" style="left:207.60px;top:496.00px;font-size:13px;line-height:13px;font-family:'Liberation Sans',sans-serif;color:#000;transform:scaleX(0.9471);">Start Playback</div>
<div style="position:absolute;left:300px;top:492px;width:99px;height:21px;background:#e1e1e1;border:1px solid #adadad;box-sizing:border-box"></div>
<div class="t" style="left:308.10px;top:496.00px;font-size:13px;line-height:13px;font-family:'Liberation Sans',sans-serif;color:#000;transform:scaleX(0.9328);">Skip Backward</div>
<div style="position:absolute;left:401px;top:492px;width:92px;height:21px;background:#e1e1e1;border:1px solid #adadad;box-sizing:border-box"></div>
<div class="t" style="left:409.90px;top:496.00px;font-size:13px;line-height:13px;font-family:'Liberation Sans',sans-serif;color:#000;transform:scaleX(0.9506);">Skip Forward</div>
<div style="position:absolute;left:499px;top:496px;width:13px;height:13px;background:#fff;border:1px solid #333;box-sizing:border-box"></div>
<svg style="position:absolute;left:499px;top:496px;" width="13" height="13" viewBox="0 0 13 13"><path d="M2.3 6.3 L5 9.2 L10.6 3.6" fill="none" stroke="#3a3a3a" stroke-width="1.05"/></svg>
<div class="t" style="left:515.00px;top:496.00px;font-size:13px;line-height:13px;font-family:'Liberation Sans',sans-serif;color:#000;transform:scaleX(0.9634);">Enable</div>
<div style="position:absolute;left:609px;top:492px;width:73px;height:21px;background:#e1e1e1;border:1px solid #adadad;box-sizing:border-box"></div>
<div class="t" style="left:630.20px;top:496.00px;font-size:13px;line-height:13px;font-family:'Liberation Sans',sans-serif;color:#000;transform:scaleX(0.9175);">Close</div>
<div style="position:absolute;left:692px;top:492px;width:73px;height:21px;background:#e1e1e1;border:2px solid #0078d7;box-sizing:border-box"></div>
<div class="t" style="left:711.60px;top:496.00px;font-size:13px;line-height:13px;font-family:'Liberation Sans',sans-serif;color:#000;transform:scaleX(1.0457);">Apply</div>
<div style="position:absolute;left:775px;top:489px;width:27px;height:27px;background:#e1e1e1;border:1px solid #adadad;box-sizing:border-box"></div>
<svg style="position:absolute;left:770px;top:484px;" width="38" height="36" viewBox="0 0 38 36"><g transform="translate(-770 -484)"><circle cx="788.5" cy="502.6" r="10.6" fill="#6a9ef8"/><path d="M785.4 499.6 Q785.4 496.6 788.7 496.6 Q791.9 496.6 791.9 499.4 Q791.9 501.3 789.9 502.4 Q788.6 503.2 788.6 504.6 V506" fill="none" stroke="#fff" stroke-width="1.9"/><rect x="787.5" y="507.2" width="2.2" height="2.1" fill="#fff"/></g></svg>
<div style="position:absolute;left:0px;top:624px;width:920px;height:55px;background:#f7f8fd"></div>
<div style="position:absolute;left:0px;top:679px;width:920px;height:1px;background:#cfcfcf"></div>
<div style="position:absolute;left:0px;top:680px;width:920px;height:1px;background:#e2e2e2"></div>
<div style="position:absolute;left:2px;top:629px;width:4px;height:1px;background:#a8a8a8"></div>
<div style="position:absolute;left:2px;top:633px;width:4px;height:1px;background:#a8a8a8"></div>
<div style="position:absolute;left:2px;top:637px;width:4px;height:1px;background:#a8a8a8"></div>
<div style="position:absolute;left:2px;top:641px;width:4px;height:1px;background:#a8a8a8"></div>
<div style="position:absolute;left:2px;top:645px;width:4px;height:1px;background:#a8a8a8"></div>
<div style="position:absolute;left:2px;top:649px;width:4px;height:1px;background:#a8a8a8"></div>
<div style="position:absolute;left:2px;top:653px;width:4px;height:1px;background:#a8a8a8"></div>
<div style="position:absolute;left:2px;top:657px;width:4px;height:1px;background:#a8a8a8"></div>
<div style="position:absolute;left:2px;top:661px;width:4px;height:1px;background:#a8a8a8"></div>
<div style="position:absolute;left:2px;top:665px;width:4px;height:1px;background:#a8a8a8"></div>
<div style="position:absolute;left:2px;top:669px;width:4px;height:1px;background:#a8a8a8"></div>
<div style="position:absolute;left:2px;top:673px;width:4px;height:1px;background:#a8a8a8"></div>
<div style="position:absolute;left:8px;top:623px;width:1px;height:56px;background:#c8c8c8"></div>
<div class="t" style="left:15.20px;top:630.00px;font-size:13px;line-height:13px;font-family:'Liberation Serif',serif;color:#000;transform:scaleX(0.8663);">Project Rate (Hz)</div>
<div style="position:absolute;left:101px;top:629px;width:1px;height:15px;background:#7a7a7a"></div>
<div class="t" style="left:107.60px;top:630.00px;font-size:13px;line-height:13px;font-family:'Liberation Serif',serif;color:#000;transform:scaleX(0.8983);">Snap-To</div>
<div style="position:absolute;left:186px;top:629px;width:1px;height:15px;background:#7a7a7a"></div>
<div style="position:absolute;left:101px;top:658px;width:1px;height:15px;background:#7a7a7a"></div>
<div style="position:absolute;left:186px;top:658px;width:1px;height:15px;background:#7a7a7a"></div>
<div style="position:absolute;left:15px;top:652px;width:80px;height:23px;background:#fff;border:1px solid #7a7a7a;box-sizing:border-box"></div>
<div class="t" style="left:19.00px;top:656.00px;font-size:13px;line-height:13px;font-family:'Liberation Sans',sans-serif;color:#000;transform:scaleX(0.9681);">44100</div>
<svg style="position:absolute;left:81.5px;top:661px;" width="10" height="6" viewBox="0 0 10 6"><path d="M0.5 0.5 L4.75 4.75 L9 0.5" fill="none" stroke="#3c3c3c" stroke-width="1.1"/></svg>
<div style="position:absolute;left:108px;top:652px;width:72px;height:23px;background:#e5e5e5;border:1px solid #adadad;box-sizing:border-box"></div>
<div class="t" style="left:113.00px;top:656.00px;font-size:13px;line-height:13px;font-family:'Liberation Sans',sans-serif;color:#000;transform:scaleX(1.0505);">Off</div>
<svg style="position:absolute;left:166px;top:661px;" width="10" height="6" viewBox="0 0 10 6"><path d="M0.5 0.5 L4.75 4.75 L9 0.5" fill="none" stroke="#3c3c3c" stroke-width="1.1"/></svg>
<div style="position:absolute;left:193px;top:625px;width:326px;height:22px;background:#e1e1e1;border:1px solid #adadad;box-sizing:border-box"></div>
<div class="t" style="left:197.50px;top:630.00px;font-size:13px;line-height:13px;font-family:'Liberation Sans',sans-serif;color:#000;transform:scaleX(0.9567);">Start and End of Selection</div>
<svg style="position:absolute;left:505px;top:634px;" width="10" height="6" viewBox="0 0 10 6"><path d="M0.5 0.5 L4.75 4.75 L9 0.5" fill="none" stroke="#3c3c3c" stroke-width="1.1"/></svg>
<div style="position:absolute;left:193px;top:652px;width:160px;height:21px;background:#d4d4d4;border-top:2px solid #6e6e6e;border-left:2px solid #6e6e6e;border-right:1px solid #e2e2e2;border-bottom:1px solid #e2e2e2;box-sizing:border-box"></div>
<div style="position:absolute;left:195px;top:654px;width:22.900000000000006px;height:18px;background:#d4d4d4"></div>
<div style="position:absolute;left:217.9px;top:654px;width:14.699999999999989px;height:18px;background:#b6bac4"></div>
<div style="position:absolute;left:232.6px;top:654px;width:22.400000000000006px;height:18px;background:#d4d4d4"></div>
<div style="position:absolute;left:255px;top:654px;width:18.80000000000001px;height:18px;background:#b6bac4"></div>
<div style="position:absolute;left:273.8px;top:654px;width:22.099999999999966px;height:18px;background:#d4d4d4"></div>
<div style="position:absolute;left:295.9px;top:654px;width:3.7000000000000455px;height:18px;background:#b6bac4"></div>
<div style="position:absolute;left:299.6px;top:654px;width:33.39999999999998px;height:18px;background:#d4d4d4"></div>
<div style="position:absolute;left:333px;top:654px;width:10px;height:18px;background:#b6bac4"></div>
<div class="t" style="left:196.80px;top:654.78px;font-size:18.07px;line-height:18.07px;font-family:'Liberation Serif',serif;color:#0000c8;transform:scaleX(0.7969);">0</div>
<div class="t" style="left:207.90px;top:654.78px;font-size:18.07px;line-height:18.07px;font-family:'Liberation Serif',serif;color:#0000c8;transform:scaleX(0.7858);">0</div>
<div class="t" style="left:221.80px;top:656.50px;font-size:15.99px;line-height:15.99px;font-family:'Liberation Serif',serif;color:#0000c8;transform:scaleX(0.7880);">h</div>
<div class="t" style="left:234.00px;top:654.78px;font-size:18.07px;line-height:18.07px;font-family:'Liberation Serif',serif;color:#0000c8;transform:scaleX(0.7748);">0</div>
<div class="t" style="left:244.90px;top:654.78px;font-size:18.07px;line-height:18.07px;font-family:'Liberation Serif',serif;color:#0000c8;transform:scaleX(0.7858);">0</div>
<div class="t" style="left:259.60px;top:654.98px;font-size:18.05px;line-height:18.05px;font-family:'Liberation Serif',serif;color:#0000c8;transform:scaleX(0.6551);">m</div>
<div class="t" style="left:274.90px;top:654.78px;font-size:18.07px;line-height:18.07px;font-family:'Liberation Serif',serif;color:#0000c8;transform:scaleX(0.7858);">0</div>
<div class="t" style="left:286.30px;top:654.78px;font-size:18.07px;line-height:18.07px;font-family:'Liberation Serif',serif;color:#0000c8;transform:scaleX(0.7969);">0</div>
<div class="t" style="left:296.50px;top:652.11px;font-size:21.19px;line-height:21.19px;font-family:'Liberation Serif',serif;color:#0000c8;transform:scaleX(0.2832);">.</div>
<div class="t" style="left:300.70px;top:654.78px;font-size:18.07px;line-height:18.07px;font-family:'Liberation Serif',serif;color:#0000c8;transform:scaleX(0.8080);">0</div>
<div class="t" style="left:311.80px;top:654.78px;font-size:18.07px;line-height:18.07px;font-family:'Liberation Serif',serif;color:#0000c8;transform:scaleX(0.7969);">0</div>
<div class="t" style="left:323.30px;top:654.78px;font-size:18.07px;line-height:18.07px;font-family:'Liberation Serif',serif;color:#0000c8;transform:scaleX(0.7969);">0</div>
<div class="t" style="left:336.50px;top:658.41px;font-size:13.31px;line-height:13.31px;font-family:'Liberation Serif',serif;color:#0000c8;transform:scaleX(1.0043);">s</div>
<div style="position:absolute;left:343px;top:654px;width:9px;height:18px;background:#a9aeba"></div>
<div style="position:absolute;left:343px;top:654px;width:1px;height:18px;background:#eef0f4"></div>
<svg style="position:absolute;left:345px;top:661px;" width="6" height="4" viewBox="0 0 6 4"><path d="M0 0 H6 L3.0 4 Z" fill="#000"/></svg>
<div style="position:absolute;left:359px;top:652px;width:160px;height:21px;background:#d4d4d4;border-top:2px solid #6e6e6e;border-left:2px solid #6e6e6e;border-right:1px solid #e2e2e2;border-bottom:1px solid #e2e2e2;box-sizing:border-box"></div>
<div style="position:absolute;left:361px;top:654px;width:22.899999999999977px;height:18px;background:#d4d4d4"></div>
<div style="position:absolute;left:383.9px;top:654px;width:14.700000000000045px;height:18px;background:#b6bac4"></div>
<div style="position:absolute;left:398.6px;top:654px;width:22.399999999999977px;height:18px;background:#d4d4d4"></div>
<div style="position:absolute;left:421px;top:654px;width:18.80000000000001px;height:18px;background:#b6bac4"></div>
<div style="position:absolute;left:439.8px;top:654px;width:22.099999999999966px;height:18px;background:#d4d4d4"></div>
<div style="position:absolute;left:461.9px;top:654px;width:3.7000000000000455px;height:18px;background:#b6bac4"></div>
<div style="position:absolute;left:465.6px;top:654px;width:33.39999999999998px;height:18px;background:#d4d4d4"></div>
<div style="position:absolute;left:499px;top:654px;width:10px;height:18px;background:#b6bac4"></div>
<div class="t" style="left:362.80px;top:654.78px;font-size:18.07px;line-height:18.07px;font-family:'Liberation Serif',serif;color:#0000c8;transform:scaleX(0.7969);">0</div>
<div class="t" style="left:373.90px;top:654.78px;font-size:18.07px;line-height:18.07px;font-family:'Liberation Serif',serif;color:#0000c8;transform:scaleX(0.7858);">0</div>
<div class="t" style="left:387.80px;top:656.50px;font-size:15.99px;line-height:15.99px;font-family:'Liberation Serif',serif;color:#0000c8;transform:scaleX(0.7880);">h</div>
<div class="t" style="left:400.00px;top:654.78px;font-size:18.07px;line-height:18.07px;font-family:'Liberation Serif',serif;color:#0000c8;transform:scaleX(0.7748);">0</div>
<div class="t" style="left:410.90px;top:654.78px;font-size:18.07px;line-height:18.07px;font-family:'Liberation Serif',serif;color:#0000c8;transform:scaleX(0.7858);">0</div>
<div class="t" style="left:425.60px;top:654.98px;font-size:18.05px;line-height:18.05px;font-family:'Liberation Serif',serif;color:#0000c8;transform:scaleX(0.6551);">m</div>
<div class="t" style="left:440.90px;top:654.78px;font-size:18.07px;line-height:18.07px;font-family:'Liberation Serif',serif;color:#0000c8;transform:scaleX(0.7858);">0</div>
<div class="t" style="left:452.30px;top:654.78px;font-size:18.07px;line-height:18.07px;font-family:'Liberation Serif',serif;color:#0000c8;transform:scaleX(0.7969);">0</div>
<div class="t" style="left:462.50px;top:652.11px;font-size:21.19px;line-height:21.19px;font-family:'Liberation Serif',serif;color:#0000c8;transform:scaleX(0.2832);">.</div>
<div class="t" style="left:466.70px;top:654.78px;font-size:18.07px;line-height:18.07px;font-family:'Liberation Serif',serif;color:#0000c8;transform:scaleX(0.8080);">0</div>
<div class="t" style="left:477.80px;top:654.78px;font-size:18.07px;line-height:18.07px;font-family:'Liberation Serif',serif;color:#0000c8;transform:scaleX(0.7969);">0</div>
<div class="t" style="left:489.30px;top:654.78px;font-size:18.07px;line-height:18.07px;font-family:'Liberation Serif',serif;color:#0000c8;transform:scaleX(0.7969);">0</div>
<div class="t" style="left:502.50px;top:658.41px;font-size:13.31px;line-height:13.31px;font-family:'Liberation Serif',serif;color:#0000c8;transform:scaleX(1.0043);">s</div>
<div style="position:absolute;left:509px;top:654px;width:9px;height:18px;background:#a9aeba"></div>
<div style="position:absolute;left:509px;top:654px;width:1px;height:18px;background:#eef0f4"></div>
<svg style="position:absolute;left:511px;top:661px;" width="6" height="4" viewBox="0 0 6 4"><path d="M0 0 H6 L3.0 4 Z" fill="#000"/></svg>
<div style="position:absolute;left:525px;top:624px;width:1px;height:55px;background:#c8c8c8"></div>
<div style="position:absolute;left:529px;top:629px;width:4px;height:1px;background:#a8a8a8"></div>
<div style="position:absolute;left:529px;top:633px;width:4px;height:1px;background:#a8a8a8"></div>
<div style="position:absolute;left:529px;top:637px;width:4px;height:1px;background:#a8a8a8"></div>
<div style="position:absolute;left:529px;top:641px;width:4px;height:1px;background:#a8a8a8"></div>
<div style="position:absolute;left:529px;top:645px;width:4px;height:1px;background:#a8a8a8"></div>
<div style="position:absolute;left:529px;top:649px;width:4px;height:1px;background:#a8a8a8"></div>
<div style="position:absolute;left:529px;top:653px;width:4px;height:1px;background:#a8a8a8"></div>
<div style="position:absolute;left:529px;top:657px;width:4px;height:1px;background:#a8a8a8"></div>
<div style="position:absolute;left:529px;top:661px;width:4px;height:1px;background:#a8a8a8"></div>
<div style="position:absolute;left:529px;top:665px;width:4px;height:1px;background:#a8a8a8"></div>
<div style="position:absolute;left:529px;top:669px;width:4px;height:1px;background:#a8a8a8"></div>
<div style="position:absolute;left:529px;top:673px;width:4px;height:1px;background:#a8a8a8"></div>
<div style="position:absolute;left:535px;top:624px;width:1px;height:55px;background:#dcdcdc"></div>
<div style="position:absolute;left:537.6px;top:631.5px;width:229px;height:39px;background:#d4d4d4;border-top:2px solid #6e6e6e;border-left:2px solid #6e6e6e;border-right:1px solid #e2e2e2;border-bottom:1px solid #e2e2e2;box-sizing:border-box"></div>
<div style="position:absolute;left:539.5px;top:633.5px;width:42.5px;height:36px;background:#d4d4d4"></div>
<div style="position:absolute;left:582px;top:633.5px;width:30.799999999999955px;height:36px;background:#b6bac4"></div>
<div style="position:absolute;left:612.8px;top:633.5px;width:42.60000000000002px;height:36px;background:#d4d4d4"></div>
<div style="position:absolute;left:655.4px;top:633.5px;width:38.39999999999998px;height:36px;background:#b6bac4"></div>
<div style="position:absolute;left:693.8px;top:633.5px;width:42.40000000000009px;height:36px;background:#d4d4d4"></div>
<div style="position:absolute;left:736.2px;top:633.5px;width:20.799999999999955px;height:36px;background:#b6bac4"></div>
<div class="t" style="left:542.60px;top:633.06px;font-size:37.33px;line-height:37.33px;font-family:'Liberation Serif',serif;color:#0000c8;transform:scaleX(0.7769);-webkit-text-stroke:0.5px #d4d4d4;paint-order:normal;">0</div>
<div class="t" style="left:563.40px;top:633.06px;font-size:37.33px;line-height:37.33px;font-family:'Liberation Serif',serif;color:#0000c8;transform:scaleX(0.7822);-webkit-text-stroke:0.5px #d4d4d4;paint-order:normal;">0</div>
<div class="t" style="left:589.70px;top:636.37px;font-size:33.86px;line-height:33.86px;font-family:'Liberation Serif',serif;color:#0000c8;transform:scaleX(0.9037);-webkit-text-stroke:0.5px #b6bac4;paint-order:normal;">h</div>
<div class="t" style="left:616.00px;top:633.06px;font-size:37.33px;line-height:37.33px;font-family:'Liberation Serif',serif;color:#0000c8;transform:scaleX(0.7769);-webkit-text-stroke:0.5px #d4d4d4;paint-order:normal;">0</div>
<div class="t" style="left:637.00px;top:633.06px;font-size:37.33px;line-height:37.33px;font-family:'Liberation Serif',serif;color:#0000c8;transform:scaleX(0.7769);-webkit-text-stroke:0.5px #d4d4d4;paint-order:normal;">0</div>
<div class="t" style="left:663.00px;top:634.04px;font-size:36.52px;line-height:36.52px;font-family:'Liberation Serif',serif;color:#0000c8;transform:scaleX(0.8271);-webkit-text-stroke:0.5px #b6bac4;paint-order:normal;">m</div>
<div class="t" style="left:696.60px;top:633.06px;font-size:37.33px;line-height:37.33px;font-family:'Liberation Serif',serif;color:#0000c8;transform:scaleX(0.7769);-webkit-text-stroke:0.5px #d4d4d4;paint-order:normal;">0</div>
<div class="t" style="left:717.70px;top:633.06px;font-size:37.33px;line-height:37.33px;font-family:'Liberation Serif',serif;color:#0000c8;transform:scaleX(0.7822);-webkit-text-stroke:0.5px #d4d4d4;paint-order:normal;">0</div>
<div class="t" style="left:744.30px;top:636.02px;font-size:33.89px;line-height:33.89px;font-family:'Liberation Serif',serif;color:#0000c8;transform:scaleX(0.8116);-webkit-text-stroke:0.5px #b6bac4;paint-order:normal;">s</div>
<div style="position:absolute;left:757px;top:633.5px;width:8.600000000000023px;height:36px;background:#b6bac4"></div>
<div style="position:absolute;left:757px;top:633.5px;width:1px;height:36px;background:#eef0f4"></div>
<svg style="position:absolute;left:758px;top:648.5px;" width="7" height="4.5" viewBox="0 0 7 4.5"><path d="M0 0 H7 L3.5 4.5 Z" fill="#000"/></svg>
<div style="position:absolute;left:757px;top:633.5px;width:1px;height:36px;background:#f4f4f4"></div>
<div style="position:absolute;left:773px;top:623px;width:1px;height:56px;background:#c8c8c8"></div>
<div style="position:absolute;left:776px;top:623px;width:1px;height:56px;background:#c8c8c8"></div>
<div style="position:absolute;left:0px;top:681px;width:920px;height:19px;background:#f0f0f0"></div>
<div style="position:absolute;left:7px;top:682px;width:1px;height:18px;background:#d4d4d4"></div>
<div style="position:absolute;left:189px;top:682px;width:1px;height:18px;background:#d4d4d4"></div>
<div style="position:absolute;left:743px;top:682px;width:1px;height:18px;background:#d4d4d4"></div>
<div class="t" style="left:12.30px;top:686.00px;font-size:13px;line-height:13px;font-family:'Liberation Sans',sans-serif;color:#000;transform:scaleX(0.9935);">Stopped.</div>
<div style="position:absolute;left:918px;top:693px;width:2px;height:2px;background:#b9b9b9"></div>
<div style="position:absolute;left:915px;top:696px;width:2px;height:2px;background:#b9b9b9"></div>
<div style="position:absolute;left:918px;top:696px;width:2px;height:2px;background:#b9b9b9"></div>
<div style="position:absolute;left:912px;top:699px;width:2px;height:2px;background:#b9b9b9"></div>
<div style="position:absolute;left:915px;top:699px;width:2px;height:2px;background:#b9b9b9"></div>
<div style="position:absolute;left:918px;top:699px;width:2px;height:2px;background:#b9b9b9"></div>
<div style="position:absolute;left:512px;top:53px;width:1px;height:4px;background:#000"></div>
<div class="t" style="left:506.10px;top:55.90px;font-size:12px;line-height:12px;font-family:'Liberation Serif',serif;color:#000;transform:scaleX(0.8000);">-54</div>
<div style="position:absolute;left:552px;top:53px;width:1px;height:4px;background:#000"></div>
<div class="t" style="left:546.10px;top:55.90px;font-size:12px;line-height:12px;font-family:'Liberation Serif',serif;color:#000;transform:scaleX(0.8000);">-48</div>
<div style="position:absolute;left:592px;top:53px;width:1px;height:4px;background:#000"></div>
<div class="t" style="left:585.70px;top:55.90px;font-size:12px;line-height:12px;font-family:'Liberation Serif',serif;color:#000;transform:scaleX(0.8000);">-42</div>
<div style="position:absolute;left:632px;top:53px;width:1px;height:4px;background:#000"></div>
<div class="t" style="left:625.70px;top:55.90px;font-size:12px;line-height:12px;font-family:'Liberation Serif',serif;color:#000;transform:scaleX(0.8000);">-36</div>
<div style="position:absolute;left:671px;top:53px;width:1px;height:4px;background:#000"></div>
<div class="t" style="left:665.10px;top:55.90px;font-size:12px;line-height:12px;font-family:'Liberation Serif',serif;color:#000;transform:scaleX(0.8000);">-30</div>
<div style="position:absolute;left:711px;top:53px;width:1px;height:4px;background:#000"></div>
<div class="t" style="left:705.10px;top:55.90px;font-size:12px;line-height:12px;font-family:'Liberation Serif',serif;color:#000;transform:scaleX(0.8000);">-24</div>
<div style="position:absolute;left:751px;top:53px;width:1px;height:4px;background:#000"></div>
<div class="t" style="left:745.10px;top:55.90px;font-size:12px;line-height:12px;font-family:'Liberation Serif',serif;color:#000;transform:scaleX(0.8000);">-18</div>
<div style="position:absolute;left:791px;top:53px;width:1px;height:4px;background:#000"></div>
<div class="t" style="left:785.10px;top:55.90px;font-size:12px;line-height:12px;font-family:'Liberation Serif',serif;color:#000;transform:scaleX(0.8000);">-12</div>
<div style="position:absolute;left:830px;top:53px;width:1px;height:4px;background:#000"></div>
<div class="t" style="left:826.50px;top:55.90px;font-size:12px;line-height:12px;font-family:'Liberation Serif',serif;color:#000;transform:scaleX(0.8000);">-6</div>
<div style="position:absolute;left:870px;top:53px;width:1px;height:4px;background:#000"></div>
<div class="t" style="left:864.70px;top:55.90px;font-size:12px;line-height:12px;font-family:'Liberation Serif',serif;color:#000;transform:scaleX(0.9500);">0</div>
<div style="position:absolute;left:512px;top:81px;width:1px;height:4px;background:#000"></div>
<div class="t" style="left:506.10px;top:83.90px;font-size:12px;line-height:12px;font-family:'Liberation Serif',serif;color:#000;transform:scaleX(0.8000);">-54</div>
<div style="position:absolute;left:552px;top:81px;width:1px;height:4px;background:#000"></div>
<div class="t" style="left:546.10px;top:83.90px;font-size:12px;line-height:12px;font-family:'Liberation Serif',serif;color:#000;transform:scaleX(0.8000);">-48</div>
<div style="position:absolute;left:592px;top:81px;width:1px;height:4px;background:#000"></div>
<div class="t" style="left:585.70px;top:83.90px;font-size:12px;line-height:12px;font-family:'Liberation Serif',serif;color:#000;transform:scaleX(0.8000);">-42</div>
<div style="position:absolute;left:632px;top:81px;width:1px;height:4px;background:#000"></div>
<div class="t" style="left:625.70px;top:83.90px;font-size:12px;line-height:12px;font-family:'Liberation Serif',serif;color:#000;transform:scaleX(0.8000);">-36</div>
<div style="position:absolute;left:671px;top:81px;width:1px;height:4px;background:#000"></div>
<div class="t" style="left:665.10px;top:83.90px;font-size:12px;line-height:12px;font-family:'Liberation Serif',serif;color:#000;transform:scaleX(0.8000);">-30</div>
<div style="position:absolute;left:711px;top:81px;width:1px;height:4px;background:#000"></div>
<div class="t" style="left:705.10px;top:83.90px;font-size:12px;line-height:12px;font-family:'Liberation Serif',serif;color:#000;transform:scaleX(0.8000);">-24</div>
<div style="position:absolute;left:751px;top:81px;width:1px;height:4px;background:#000"></div>
<div class="t" style="left:745.10px;top:83.90px;font-size:12px;line-height:12px;font-family:'Liberation Serif',serif;color:#000;transform:scaleX(0.8000);">-18</div>
<div style="position:absolute;left:791px;top:81px;width:1px;height:4px;background:#000"></div>
<div class="t" style="left:785.10px;top:83.90px;font-size:12px;line-height:12px;font-family:'Liberation Serif',serif;color:#000;transform:scaleX(0.8000);">-12</div>
<div style="position:absolute;left:830px;top:81px;width:1px;height:4px;background:#000"></div>
<div class="t" style="left:826.50px;top:83.90px;font-size:12px;line-height:12px;font-family:'Liberation Serif',serif;color:#000;transform:scaleX(0.8000);">-6</div>
<div style="position:absolute;left:870px;top:81px;width:1px;height:4px;background:#000"></div>
<div class="t" style="left:864.70px;top:83.90px;font-size:12px;line-height:12px;font-family:'Liberation Serif',serif;color:#000;transform:scaleX(0.9500);">0</div>
<div style="position:absolute;left:614px;top:57px;width:114px;height:13px;background:#f9faff"></div>
<div class="t" style="left:617.40px;top:57.70px;font-size:11px;line-height:11px;font-family:'Liberation Serif',serif;color:#000;transform:scaleX(0.9585);">Click to Start Monitoring</div>
</body></html>
